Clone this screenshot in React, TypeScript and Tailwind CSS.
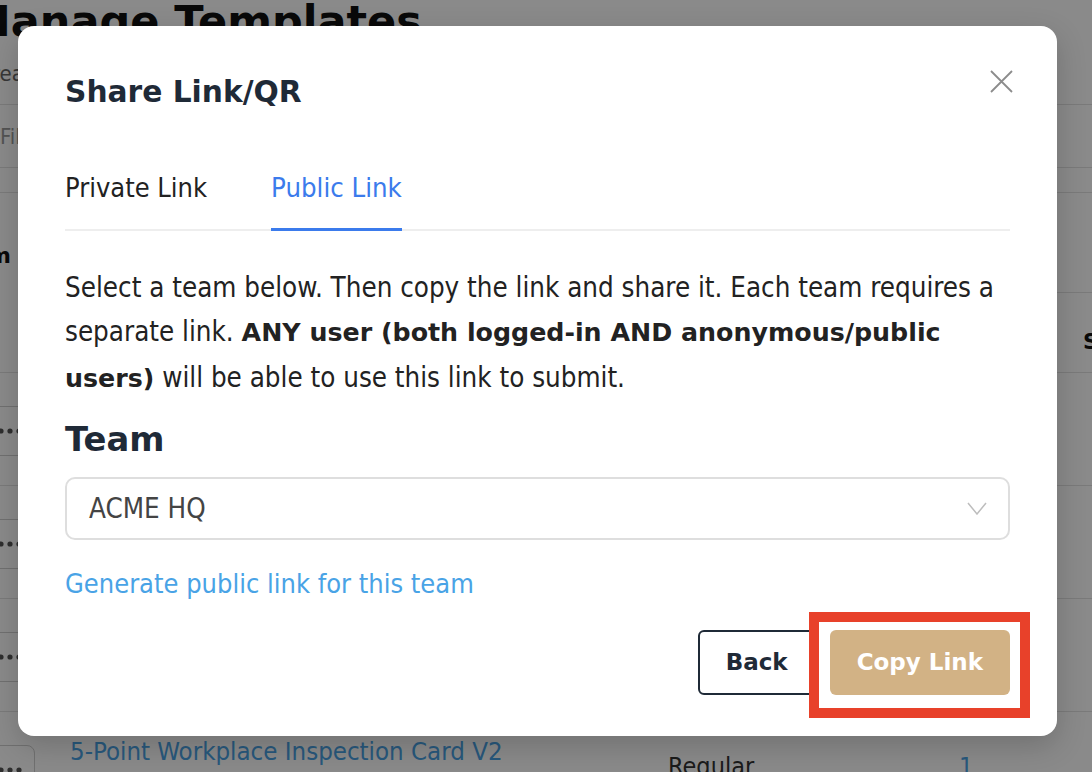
import React from 'react'

const rows = [
  { name: 'Daily Vehicle Inspection', type: 'Regular', count: 4 },
  { name: 'Incident Report Form', type: 'Regular', count: 2 },
  { name: 'Site Hazard Assessment', type: 'Regular', count: 3 },
  { name: '5-Point Workplace Inspection Card V2', type: 'Regular', count: 1 },
]

function DotsIcon() {
  return (
    <svg viewBox="0 0 24 6" className="h-[6px] w-[24px]" fill="#555">
      <circle cx="3" cy="3" r="2.6" />
      <circle cx="12" cy="3" r="2.6" />
      <circle cx="21" cy="3" r="2.6" />
    </svg>
  )
}

function BackgroundPage() {
  return (
    <div className="flex flex-col text-[#111]">
      <h1 className="-ml-[32px] whitespace-nowrap font-['DejaVu_Sans',sans-serif] text-[43px] font-bold leading-none">
        Manage Templates
      </h1>
      <p className="-ml-[22px] mt-[16px] whitespace-nowrap text-[22px] leading-[30px] text-[#666]">
        Create and manage your templates
      </p>

      <div className="mt-[15px] flex h-[64px] items-center border-y border-[#e2e2e2]">
        <span className="whitespace-nowrap text-[22px] text-[#9a9a9a]">Filter templates...</span>
      </div>

      <div className="mt-[24px] h-[100px] border-t border-[#e2e2e2] pt-[46px]">
        <span className="-ml-[52px] block whitespace-nowrap font-['DejaVu_Sans',sans-serif] text-[22px] font-bold">
          Form
        </span>
      </div>
      <div className="ml-[50px] h-[80px] border-t border-[#e2e2e2] pt-[32px]">
        <span className="ml-[1033px] block whitespace-nowrap font-['DejaVu_Sans',sans-serif] text-[22px] font-bold">
          Status
        </span>
      </div>

      {rows.map((row) => (
        <div
          key={row.name}
          className="-ml-[15px] grid h-[113px] grid-cols-[50px_598px_294px_1fr] border-t border-[#e2e2e2]"
        >
          <div className="pt-[33px]">
            <div className="flex h-[50px] w-[50px] items-center justify-center rounded-[8px] border border-[#cfcfcf]">
              <DotsIcon />
            </div>
          </div>
          <div className="whitespace-nowrap pl-[35px] pt-[23px] text-[25.6px] leading-[32px] text-[#4ba3e6]">
            {row.name}
          </div>
          <div className="pl-[35px] pt-[39px] text-[25px] leading-[32px] text-[#333]">{row.type}</div>
          <div className="pl-[32px] pt-[39px] text-[25px] leading-[32px] text-[#4ba3e6]">{row.count}</div>
        </div>
      ))}
    </div>
  )
}

function ShareDialog() {
  return (
    <div className="absolute left-[18px] top-[26px] w-[1039px] rounded-[16px] bg-white px-[47px] pb-[41px] pt-[48px] shadow-[0_10px_30px_rgba(0,0,0,0.18)]">
      <h2 className="font-['DejaVu_Sans',sans-serif] text-[29.7px] font-bold leading-[36px] text-[#1f2a37]">
        Share Link/QR
      </h2>
      <button className="absolute right-[44px] top-[44px] h-[23px] w-[23px]">
        <svg viewBox="0 0 23 23" className="h-[23px] w-[23px]" fill="none" stroke="#8c8c8c" strokeWidth="1.8">
          <path d="M1 1L22 22M22 1L1 22" />
        </svg>
      </button>

      <div className="mt-[62px] flex gap-[64px] border-b-2 border-[#eeeeee] text-[27px] leading-[32px]">
        <button className="pb-[25px] text-[#222]">Private Link</button>
        <button className="-mb-[2px] border-b-[3px] border-[#3b7bec] pb-[24px] text-[27.3px] text-[#3b7bec]">
          Public Link
        </button>
      </div>

      <p className="mt-[34px] text-[27.5px] leading-[44px] text-[#222]">
        Select a team below. Then copy the link and share it. Each team requires a separate link.{' '}
        <b className="font-['DejaVu_Sans',sans-serif] text-[25.3px] font-bold">
          ANY user (both logged-in AND anonymous/public users)
        </b>{' '}
        will be able to use this link to submit.
      </p>

      <h3 className="mt-[19px] font-['DejaVu_Sans',sans-serif] text-[33.8px] font-bold leading-[40px] text-[#1f2a37]">
        Team
      </h3>

      <div className="mt-[17px] flex h-[63px] items-center justify-between rounded-[10px] border-2 border-[#dedede] pl-[22px] pr-[21px]">
        <span className="text-[27.5px] text-[#444]">ACME HQ</span>
        <svg viewBox="0 0 20 13" className="h-[13px] w-[20px]" fill="none" stroke="#bdbdbd" strokeWidth="1.5">
          <polyline points="1,1 10,12 19,1" />
        </svg>
      </div>

      <div className="mt-[28px] text-[27px] leading-[32px] text-[#49a3e6]">Generate public link for this team</div>

      <div className="mt-[30px] flex justify-end gap-[14px]">
        <button className="h-[65px] rounded-[6px] border-2 border-[#1f2a37] px-[26px] font-['DejaVu_Sans',sans-serif] text-[23px] font-bold text-[#1f2a37]">
          Back
        </button>
        <button className="h-[65px] rounded-[6px] bg-[#d2b285] px-[27px] font-['DejaVu_Sans',sans-serif] text-[23px] font-bold text-white">
          Copy Link
        </button>
      </div>
    </div>
  )
}

export default function App() {
  return (
    <div className="relative h-[772px] w-full overflow-hidden bg-white font-['DejaVu_Sans_Condensed','DejaVu_Sans',sans-serif]">
      <BackgroundPage />
      <div className="absolute inset-0 bg-black/[0.46]" />
      <ShareDialog />
      <div className="pointer-events-none absolute left-[809px] top-[612px] h-[106px] w-[221px] border-[10px] border-[#e8412a]" />
    </div>
  )
}
